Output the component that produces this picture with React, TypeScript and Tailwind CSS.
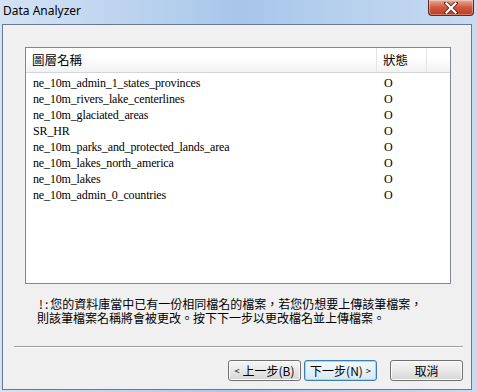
const layers = [
  "ne_10m_admin_1_states_provinces",
  "ne_10m_rivers_lake_centerlines",
  "ne_10m_glaciated_areas",
  "SR_HR",
  "ne_10m_parks_and_protected_lands_area",
  "ne_10m_lakes_north_america",
  "ne_10m_lakes",
  "ne_10m_admin_0_countries",
];

const cjk = "font-['Noto_Sans_CJK_TC','Noto_Sans',sans-serif]";

function CloseButton() {
  return (
    <div className="absolute top-0 right-[3px] w-[46px] h-[16px] rounded-b-[4px] border border-t-0 border-[#5b2a22] bg-gradient-to-b from-[#e9a99a] via-[#d0583e] to-[#c23a1f] flex items-center justify-center shadow-[inset_0_0_0_1px_rgba(255,255,255,0.35)]">
      <svg width="14" height="12" viewBox="0 0 14 12">
        <path d="M2 1 L12 11 M12 1 L2 11" stroke="#5a2a20" strokeWidth="4" strokeLinecap="square" />
        <path d="M2.5 1.5 L11.5 10.5 M11.5 1.5 L2.5 10.5" stroke="#ffffff" strokeWidth="2.2" strokeLinecap="square" />
      </svg>
    </div>
  );
}

function Button({ children, primary }: { children: React.ReactNode; primary?: boolean }) {
  return (
    <button
      className={
        "h-[21px] w-[73px] rounded-[3px] border text-[12px] leading-none text-black flex items-center justify-center " +
        cjk +
        (primary
          ? " border-[#3c7fb1] bg-gradient-to-b from-[#f4f9fd] via-[#e6f1f9] to-[#d6e8f4] shadow-[inset_0_0_0_1px_#9fd5f5]"
          : " border-[#707070] bg-gradient-to-b from-[#f6f6f6] via-[#e8e8e8] to-[#d6d6d6] shadow-[inset_0_0_0_1px_#fbfbfb]")
      }
    >
      {children}
    </button>
  );
}

export default function App() {
  return (
    <div className="relative w-[477px] h-[392px] overflow-hidden bg-gradient-to-r from-[#d4e3f4] via-[#a8c6ea] to-[#c8dbf1] pl-[2px] pt-[24px]">
      <div className="absolute top-[3px] left-[3px] text-[12px] text-black font-['Noto_Sans',sans-serif] leading-[16px]">
        Data Analyzer
      </div>
      <CloseButton />

      <div className="w-[470px] h-[366px] border border-[#687991] bg-[#f0f0f0] flex flex-col">
        {/* list */}
        <div className="ml-[22px] mt-[22px] w-[426px] h-[237px] border border-[#828790] bg-white flex flex-col">
          <div className={"h-[25px] flex items-stretch border-b border-[#d5d5d5] bg-gradient-to-b from-white from-40% to-[#f1f2f4] text-[12.5px] text-black " + cjk}>
            <div className="w-[351px] pl-[6px] flex items-center border-r border-[#e3e4e6]">圖層名稱</div>
            <div className="w-[50px] pl-[6px] flex items-center border-r border-[#e3e4e6]">狀態</div>
            <div className="flex-1" />
          </div>
          <div className="pt-[2px]">
            {layers.map((name) => (
              <div key={name} className="h-[16px] flex items-center text-[12px] text-black font-['Liberation_Serif',serif]">
                <div className="w-[352px] pl-[7px] tracking-[-0.15px] whitespace-nowrap">{name}</div>
                <div className="pl-[6px]">O</div>
              </div>
            ))}
          </div>
        </div>

        {/* note */}
        <div className={"ml-[34px] mt-[13px] text-[12px] leading-[14px] text-black " + cjk}>
          <div>
            <span className="ml-[2px] tracking-[2px]">!:</span>您的資料庫當中已有一份相同檔名的檔案，若您仍想要上傳該筆檔案，
          </div>
          <div>則該筆檔案名稱將會被更改。按下下一步以更改檔名並上傳檔案。</div>
        </div>

        {/* separator */}
        <div className="ml-[11px] mt-[21px] mr-[8px] border-t border-[#a0a0a0] border-b border-b-white" />

        {/* buttons */}
        <div className="mt-[12px] mr-[8px] flex justify-end">
          <div className="flex gap-[3px]">
            <Button>
              <span className="text-[9px] mr-[3px]">&lt;</span>上一步(B)
            </Button>
            <Button primary>
              下一步(N)<span className="text-[9px] ml-[3px]">&gt;</span>
            </Button>
          </div>
          <div className="ml-[13px]">
            <Button>取消</Button>
          </div>
        </div>
      </div>
    </div>
  );
}
